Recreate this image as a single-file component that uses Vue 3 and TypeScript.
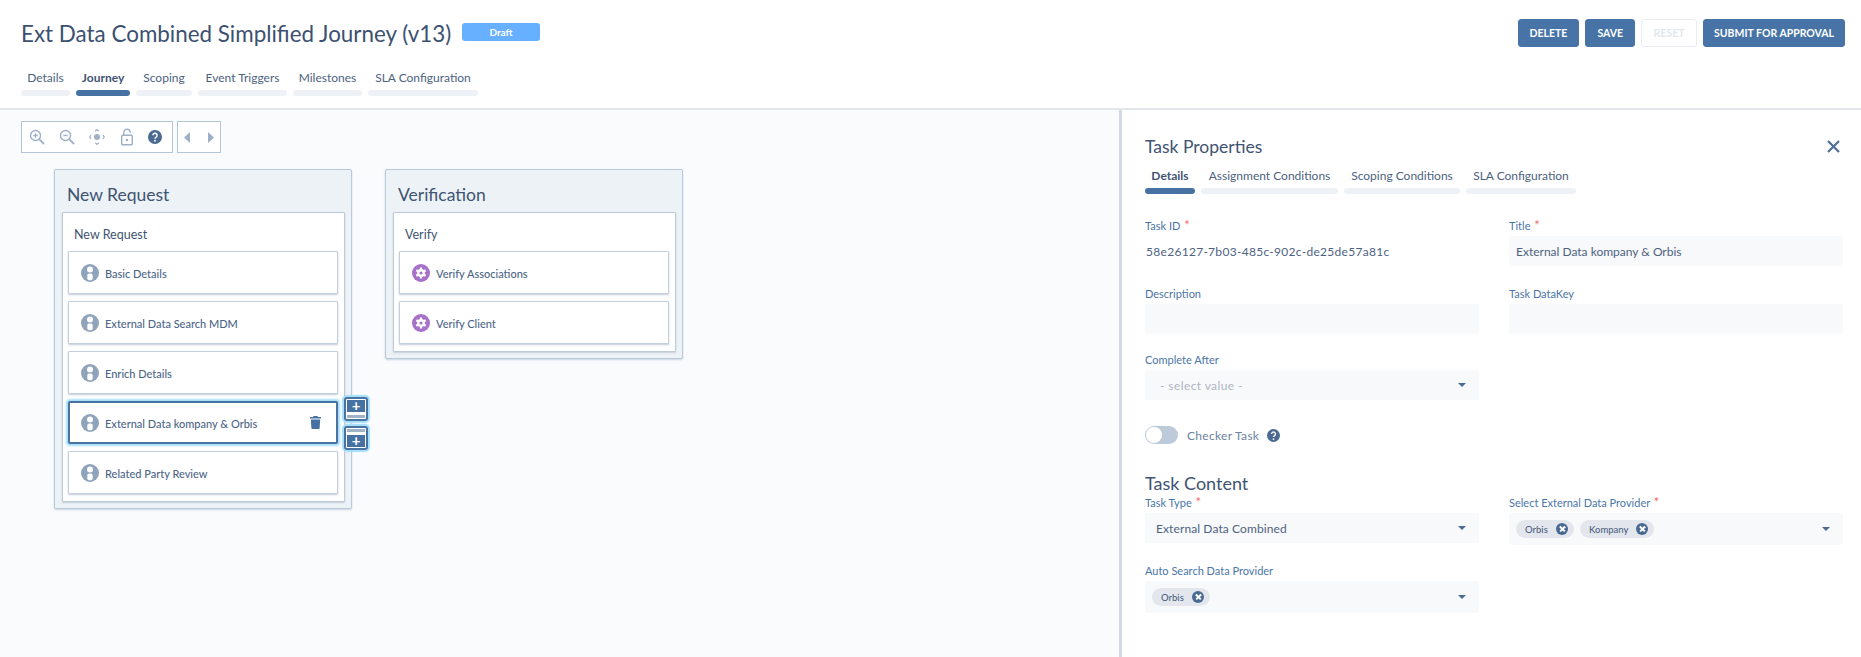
<script setup lang="ts">
interface Tab { label: string; width: number; active?: boolean }
interface Task { label: string; kind: 'user' | 'gear'; selected?: boolean }
interface Lane { title: string; group: string; tasks: Task[] }

const mainTabs: Tab[] = [
  { label: 'Details', width: 49 },
  { label: 'Journey', width: 54, active: true },
  { label: 'Scoping', width: 56 },
  { label: 'Event Triggers', width: 89 },
  { label: 'Milestones', width: 69 },
  { label: 'SLA Configuration', width: 110 },
]
const panelTabs: Tab[] = [
  { label: 'Details', width: 50, active: true },
  { label: 'Assignment Conditions', width: 137 },
  { label: 'Scoping Conditions', width: 116 },
  { label: 'SLA Configuration', width: 110 },
]
const lanes: Lane[] = [
  {
    title: 'New Request',
    group: 'New Request',
    tasks: [
      { label: 'Basic Details', kind: 'user' },
      { label: 'External Data Search MDM', kind: 'user' },
      { label: 'Enrich Details', kind: 'user' },
      { label: 'External Data kompany & Orbis', kind: 'user', selected: true },
      { label: 'Related Party Review', kind: 'user' },
    ],
  },
  {
    title: 'Verification',
    group: 'Verify',
    tasks: [
      { label: 'Verify Associations', kind: 'gear' },
      { label: 'Verify Client', kind: 'gear' },
    ],
  },
]
</script>

<template>
  <div class="page">
    <header class="header">
      <div class="top">
        <h1 class="title">Ext Data Combined Simplified Journey (v13)</h1>
        <span class="badge">Draft</span>
        <div class="actions">
          <button class="btn">DELETE</button>
          <button class="btn">SAVE</button>
          <button class="btn off">RESET</button>
          <button class="btn wide">SUBMIT FOR APPROVAL</button>
        </div>
      </div>
      <nav class="tabs main-tabs">
        <div v-for="t in mainTabs" :key="t.label" class="tab" :class="{ active: t.active }" :style="{ width: t.width + 'px' }">
          <span class="tab-text">{{ t.label }}</span>
          <i class="tab-bar"></i>
        </div>
      </nav>
    </header>

    <div class="body">
      <main class="canvas">
        <div class="toolbar">
          <div class="tool-box tools">
            <svg width="16" height="16" viewBox="0 0 16 16" fill="none" stroke="#9db0c8" stroke-width="1.4"><circle cx="6.5" cy="6.5" r="5"/><path d="M10.2 10.2 15 15" stroke-width="1.8"/><path d="M4.3 6.5h4.4M6.5 4.3v4.4"/></svg>
            <svg width="16" height="16" viewBox="0 0 16 16" fill="none" stroke="#9db0c8" stroke-width="1.4"><circle cx="6.5" cy="6.5" r="5"/><path d="M10.2 10.2 15 15" stroke-width="1.8"/><path d="M4.3 6.5h4.4"/></svg>
            <svg width="16" height="16" viewBox="0 0 16 16" fill="none" stroke="#9db0c8" stroke-width="1.2"><circle cx="8" cy="8" r="3" fill="#9db0c8" stroke="none"/><path d="M6.2 2 8 .7 9.8 2M6.2 14 8 15.3 9.8 14M2 6.2.7 8 2 9.8M14 6.2 15.3 8 14 9.8"/></svg>
            <svg width="14" height="18" viewBox="0 0 14 18" fill="none" stroke="#9db0c8" stroke-width="1.4"><rect x="1.7" y="7.2" width="10.6" height="9.6" rx="1"/><path d="M3.8 7V4.4a3.2 3.2 0 0 1 6.4 0V5"/><circle cx="7" cy="12" r="1.3" fill="#9db0c8" stroke="none"/></svg>
            <svg width="14" height="14" viewBox="0 0 14 14"><circle cx="7" cy="7" r="7" fill="#4a6a91"/><path d="M4.9 5.3a2.1 2.1 0 1 1 3.2 1.8c-.7.4-1.1.8-1.1 1.6" fill="none" stroke="#fff" stroke-width="1.5"/><circle cx="7" cy="10.8" r=".95" fill="#fff"/></svg>
          </div>
          <div class="tool-box nav">
            <svg width="6" height="11" viewBox="0 0 7 12" preserveAspectRatio="none"><path d="M7 0v12L0 6z" fill="#9db0c8"/></svg>
            <svg width="6" height="11" viewBox="0 0 7 12" preserveAspectRatio="none"><path d="M0 0v12l7-6z" fill="#9db0c8"/></svg>
          </div>
        </div>

        <div class="lanes">
          <section v-for="lane in lanes" :key="lane.title" class="lane">
            <h2 class="lane-title">{{ lane.title }}</h2>
            <div class="group">
              <h3 class="group-title">{{ lane.group }}</h3>
              <div class="task-list">
                <div v-for="task in lane.tasks" :key="task.label" class="task" :class="{ selected: task.selected }">
                  <svg v-if="task.kind === 'user'" class="task-icon" width="18" height="18" viewBox="0 0 18 18">
                    <circle cx="9" cy="9" r="9" fill="#8fa3bb"/>
                    <circle cx="9" cy="5.4" r="3" fill="#fff"/>
                    <path d="M6.3 11.4a1.8 1.8 0 0 1 1.8-1.8h1.8a1.8 1.8 0 0 1 1.8 1.8v3.2a1.8 1.8 0 0 1-1.8 1.6H8.1a1.8 1.8 0 0 1-1.8-1.6z" fill="#fff"/>
                  </svg>
                  <svg v-else class="task-icon" width="18" height="18" viewBox="0 0 18 18">
                    <circle cx="9" cy="9" r="9" fill="#a871c9"/>
                    <circle cx="9" cy="9" r="3.9" fill="#fff"/>
                    <path d="M9 3.6v10.8M4.3 6.3l9.4 5.4M4.3 11.7l9.4-5.4" stroke="#fff" stroke-width="2.2"/>
                    <circle cx="9" cy="9" r="1.6" fill="#a871c9"/>
                  </svg>
                  <span class="task-label">{{ task.label }}</span>
                  <svg v-if="task.selected" class="trash" width="11" height="13" viewBox="0 0 11 13">
                    <path d="M3.6 0h3.8l.6 1H11v1.5H0V1h3zM.8 3.4h9.4l-.6 8.8a.9.9 0 0 1-.9.8H2.3a.9.9 0 0 1-.9-.8z" fill="#4672a3"/>
                  </svg>
                  <div v-if="task.selected" class="add-buttons">
                    <div class="add-btn">
                      <span class="add-blue">+</span>
                      <i class="add-line"></i>
                    </div>
                    <div class="add-btn">
                      <i class="add-line"></i>
                      <span class="add-blue">+</span>
                    </div>
                  </div>
                </div>
              </div>
            </div>
          </section>
        </div>
      </main>

      <aside class="panel">
        <div class="panel-head">
          <h2 class="panel-title">Task Properties</h2>
          <svg class="close" width="13" height="13" viewBox="0 0 13 13"><path d="M1 1l11 11M12 1 1 12" stroke="#4f6f96" stroke-width="2.2"/></svg>
        </div>
        <nav class="tabs panel-tabs">
          <div v-for="t in panelTabs" :key="t.label" class="tab" :class="{ active: t.active }" :style="{ width: t.width + 'px' }">
            <span class="tab-text">{{ t.label }}</span>
            <i class="tab-bar"></i>
          </div>
        </nav>

        <div class="form-grid first">
          <div class="field row-one">
            <label class="label">Task ID <b>*</b></label>
            <div class="static">58e26127-7b03-485c-902c-de25de57a81c</div>
          </div>
          <div class="field row-one">
            <label class="label">Title <b>*</b></label>
            <div class="input">External Data kompany &amp; Orbis</div>
          </div>
          <div class="field">
            <label class="label">Description</label>
            <div class="input"></div>
          </div>
          <div class="field">
            <label class="label">Task DataKey</label>
            <div class="input"></div>
          </div>
          <div class="field">
            <label class="label">Complete After</label>
            <div class="input select placeholder">- select value -<i class="caret"></i></div>
          </div>
        </div>

        <div class="checker">
          <span class="toggle"><i class="knob"></i></span>
          <span class="checker-text">Checker Task</span>
          <svg width="13" height="13" viewBox="0 0 14 14"><circle cx="7" cy="7" r="7" fill="#4a6a91"/><path d="M4.9 5.3a2.1 2.1 0 1 1 3.2 1.8c-.7.4-1.1.8-1.1 1.6" fill="none" stroke="#fff" stroke-width="1.5"/><circle cx="7" cy="10.8" r=".95" fill="#fff"/></svg>
        </div>

        <h2 class="section-title">Task Content</h2>

        <div class="form-grid">
          <div class="field">
            <label class="label">Task Type <b>*</b></label>
            <div class="input select">External Data Combined<i class="caret"></i></div>
          </div>
          <div class="field">
            <label class="label">Select External Data Provider <b>*</b></label>
            <div class="input multi">
              <span class="chip chip-orbis">Orbis<i class="chip-x"></i></span>
              <span class="chip chip-kompany">Kompany<i class="chip-x"></i></span>
              <i class="caret"></i>
            </div>
          </div>
          <div class="field">
            <label class="label">Auto Search Data Provider</label>
            <div class="input multi">
              <span class="chip chip-orbis">Orbis<i class="chip-x"></i></span>
              <i class="caret"></i>
            </div>
          </div>
        </div>
      </aside>
    </div>
  </div>
</template>

<style scoped>
.page {
  width: 1861px;
  height: 657px;
  overflow: hidden;
  display: flex;
  flex-direction: column;
  background: #fff;
  font-family: Lato, "Noto Sans", sans-serif;
  color: #3f5472;
}
.header {
  height: 110px;
  flex: none;
  box-sizing: border-box;
  border-bottom: 2px solid #e3e7ec;
  padding: 19px 16px 0 21px;
}
.top {
  display: flex;
  align-items: center;
  height: 28px;
}
.title {
  margin: 0;
  font-size: 22.4px;
  font-weight: 400;
  color: #3c5170;
  width: 441px;
  white-space: nowrap;
}
.badge {
  width: 78px;
  height: 18px;
  margin-top: -2px;
  border-radius: 3px;
  background: #66b0ff;
  color: #fff;
  font-size: 10px;
  font-weight: 700;
  display: flex;
  align-items: center;
  justify-content: center;
}
.actions {
  margin-left: auto;
  display: flex;
  gap: 6px;
}
.btn {
  height: 28px;
  padding: 0 11px;
  border: 1px solid #4773a6;
  border-radius: 3px;
  background: #4773a6;
  color: #fff;
  font-family: inherit;
  font-size: 10.5px;
  font-weight: 700;
  white-space: nowrap;
}
.btn.wide {
  padding: 0 10px;
}
.btn.off {
  width: 56px;
  padding: 0;
  background: #fff;
  border-color: #e9edf2;
  color: #e2e7ee;
}
.tabs {
  display: flex;
  gap: 6px;
}
.main-tabs {
  margin-top: 24px;
}
.tab {
  display: flex;
  flex-direction: column;
  align-items: center;
  gap: 5px;
}
.tab-text {
  font-size: 12px;
  line-height: 14px;
  white-space: nowrap;
  color: #4d6280;
}
.tab.active .tab-text {
  font-weight: 700;
  color: #3f5472;
}
.tab-bar {
  display: block;
  width: 100%;
  height: 6px;
  border-radius: 3px;
  background: #eef2f6;
}
.tab.active .tab-bar {
  background: #4672a3;
}
.body {
  flex: 1;
  display: flex;
  min-height: 0;
}
.canvas {
  flex: 1;
  background: #f9fbfd;
  padding: 11px 0 0 21px;
}
.toolbar {
  display: flex;
  gap: 4px;
}
.tool-box {
  height: 32px;
  box-sizing: border-box;
  border: 1px solid #b5c5d8;
  background: #fff;
  display: flex;
  align-items: center;
}
.tools {
  width: 152px;
  padding: 0 0 0 7px;
  gap: 14.2px;
}
.nav {
  width: 44px;
  padding: 0 6px;
  justify-content: space-between;
  background: #fff;
}
.lanes {
  display: flex;
  align-items: flex-start;
  gap: 33px;
  margin: 16px 0 0 33px;
}
.lane {
  width: 298px;
  box-sizing: border-box;
  padding: 0 6px 6px 7px;
  background: #edf2f6;
  border: 1px solid #b9c8da;
  border-radius: 2px;
  box-shadow: 0 1px 2px rgba(120, 140, 170, 0.35);
}
.lane-title {
  margin: 0;
  height: 42px;
  padding-left: 5px;
  line-height: 49px;
  font-size: 17.5px;
  font-weight: 400;
  color: #3f5472;
}
.group {
  background: #fff;
  border: 1px solid #bccada;
  box-shadow: 0 1px 2px rgba(120, 140, 170, 0.35);
  border-radius: 1px;
  padding: 0 6px 7px 5px;
}
.group-title {
  margin: 0;
  height: 38px;
  padding-left: 6px;
  font-size: 12.5px;
  font-weight: 400;
  line-height: 44px;
  color: #3f5472;
}
.task-list {
  display: flex;
  flex-direction: column;
  gap: 7px;
}
.task {
  position: relative;
  height: 43px;
  box-sizing: border-box;
  border: 1px solid #c3cfdd;
  border-radius: 1px;
  background: #fff;
  box-shadow: 0 1px 2px rgba(120, 140, 170, 0.45);
  display: flex;
  align-items: center;
  padding-left: 12px;
}
.task.selected {
  border: 2px solid #4a72a3;
  border-radius: 2px;
  padding-left: 11px;
  box-shadow: 0 0 2px 2px #a4dffa;
}
.task-icon {
  flex: none;
}
.task-label {
  margin-left: 6px;
  padding-top: 2px;
  font-size: 11px;
  font-weight: 500;
  color: #4d6688;
  white-space: nowrap;
}
.trash {
  margin-left: auto;
  margin-right: 15px;
}
.add-buttons {
  position: absolute;
  left: 274px;
  top: -6px;
  display: flex;
  flex-direction: column;
  gap: 5px;
}
.add-btn {
  width: 24px;
  height: 24px;
  box-sizing: border-box;
  border: 2px solid #4a72a3;
  border-radius: 3px;
  background: #fff;
  box-shadow: 0 0 1px 2px #a4dffa;
  padding: 1px;
  display: flex;
  flex-direction: column;
  justify-content: space-between;
}
.add-blue {
  display: block;
  height: 12px;
  flex: none;
  background: #4672a3;
  color: #fff;
  font-size: 15px;
  font-weight: 700;
  line-height: 11px;
  text-align: center;
}
.add-line {
  display: block;
  height: 3px;
  flex: none;
  background: #a1b2c6;
}
.panel {
  width: 742px;
  flex: none;
  box-sizing: border-box;
  background: #fff;
  border-left: 3px solid #d2d9e4;
  padding: 27px 18px 0 23px;
}
.panel-head {
  display: flex;
  align-items: center;
  justify-content: space-between;
  height: 18px;
}
.panel-title {
  margin: 0;
  font-size: 17.5px;
  font-weight: 400;
  color: #3f5472;
}
.close {
  margin-right: 3px;
}
.panel-tabs {
  margin-top: 14px;
}
.form-grid {
  display: grid;
  grid-template-columns: 334px 334px;
  column-gap: 30px;
  row-gap: 19px;
  align-items: start;
}
.form-grid.first {
  margin-top: 25px;
}
.field {
  display: flex;
  flex-direction: column;
  gap: 3px;
}
.row-one {
  margin-bottom: 2px;
}
.label {
  height: 14px;
  font-size: 11px;
  line-height: 14px;
  color: #4a76a8;
  white-space: nowrap;
}
.label b {
  color: #f56a6a;
  font-size: 13px;
  line-height: 0;
  font-weight: 400;
  margin-left: 1px;
  vertical-align: 0;
}
.static {
  height: 30px;
  display: flex;
  align-items: center;
  padding-left: 1px;
  font-size: 12px;
  letter-spacing: 0.29px;
  color: #4d6280;
}
.input {
  position: relative;
  height: 30px;
  box-sizing: border-box;
  display: flex;
  align-items: center;
  padding-left: 7px;
  border-radius: 3px;
  background: #f8f9fb;
  font-size: 12px;
  color: #4d6280;
}
.select {
  padding-left: 11px;
  letter-spacing: 0.1px;
}
.placeholder {
  padding-left: 15px;
  letter-spacing: 0.4px;
  color: #aeb6c2;
}
.multi {
  height: 32px;
  gap: 6px;
}
.caret {
  position: absolute;
  right: 13px;
  top: 50%;
  margin-top: -2px;
  width: 0;
  height: 0;
  border-left: 4px solid transparent;
  border-right: 4px solid transparent;
  border-top: 4.5px solid #4a6a91;
}
.chip {
  height: 18px;
  box-sizing: border-box;
  border-radius: 9px;
  background: #e3e7ed;
  display: flex;
  align-items: center;
  justify-content: space-between;
  padding: 0 6px 0 9px;
  font-size: 9.5px;
  font-weight: 500;
  color: #4d6280;
}
.chip-orbis {
  width: 58px;
}
.chip-kompany {
  width: 74px;
}
.chip-x {
  position: relative;
  display: block;
  width: 12px;
  height: 12px;
  border-radius: 50%;
  background: #4a6a91;
}
.chip-x::before,
.chip-x::after {
  content: "";
  position: absolute;
  left: 2.5px;
  top: 5.2px;
  width: 7px;
  height: 1.5px;
  background: #fff;
}
.chip-x::before {
  transform: rotate(45deg);
}
.chip-x::after {
  transform: rotate(-45deg);
}
.checker {
  display: flex;
  align-items: center;
  margin-top: 26px;
  height: 18px;
}
.toggle {
  position: relative;
  display: block;
  width: 33px;
  height: 18px;
  border-radius: 9px;
  background: #bccad9;
}
.knob {
  position: absolute;
  left: 1px;
  top: 1px;
  display: block;
  width: 16px;
  height: 16px;
  border-radius: 50%;
  background: #fff;
}
.checker-text {
  margin: 0 8px 0 9px;
  font-size: 12px;
  letter-spacing: 0.3px;
  color: #6d83a0;
}
.section-title {
  margin: 28px 0 0;
  height: 24px;
  font-size: 18px;
  line-height: 23px;
  font-weight: 400;
  color: #3f5472;
}
</style>
